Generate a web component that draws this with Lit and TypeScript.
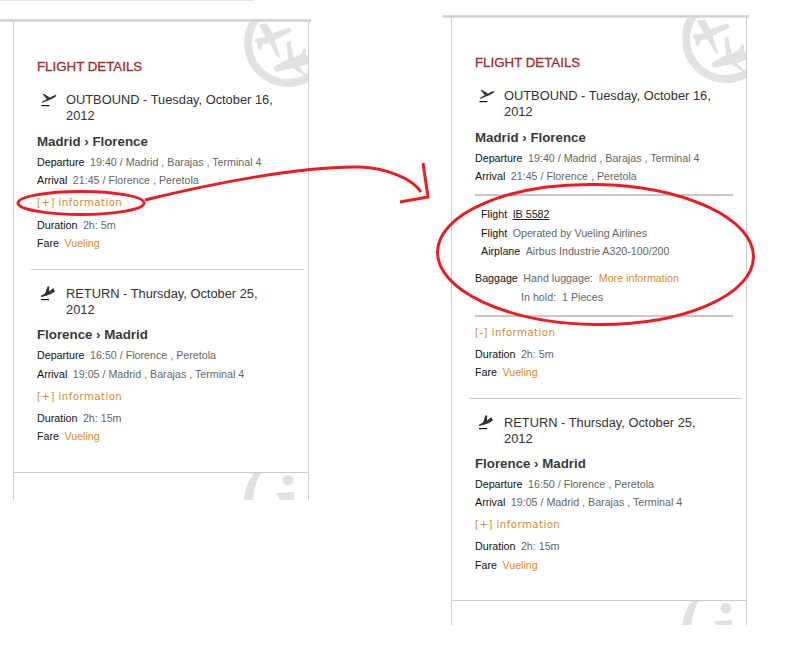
import { LitElement, html, css, svg } from "lit";
import { customElement, property } from "lit/decorators.js";

const OUT_ICON = svg`<path d="M2.5 10 L15 3.5 Q17.5 2.5 17.3 3.7 Q16.5 5.5 9 8.5 L3.5 10.8 Z" fill="#333"/><path d="M3.5 2 L5 2 L11 5.5 L8 7.5 Z" fill="#333"/><rect x="2.5" y="13" width="8" height="1.2" fill="#111"/>`;
const RET_ICON = svg`<path d="M1.5 10 L6 7.5 L8.5 0.5 L10.2 0.5 L10 5.5 L13.8 2.5 L15 2.5 L15 4.5 Q16.5 4.5 16 5.5 Q12 8.5 8 9.5 L2.5 11 Z" fill="#333"/><rect x="2" y="13" width="8" height="1.2" fill="#111"/>`;

interface Leg {
  kind: "out" | "ret";
  head: string;
  route: string;
  dep: string;
  arr: string;
  dur: string;
  depCls?: string;
  arrCls?: string;
  infoCls: string;
  afterCls: string;
  fareCls?: string;
  details?: boolean;
}

const outbound = {
  kind: "out" as const,
  head: "OUTBOUND - Tuesday, October 16, 2012",
  route: "Madrid › Florence",
  dep: "19:40 / Madrid , Barajas , Terminal 4",
  arr: "21:45 / Florence , Peretola",
  dur: "2h: 5m",
};
const inbound = {
  kind: "ret" as const,
  head: "RETURN - Thursday, October 25, 2012",
  route: "Florence › Madrid",
  dep: "16:50 / Florence , Peretola",
  arr: "19:05 / Madrid , Barajas , Terminal 4",
  dur: "2h: 15m",
};

@customElement("flight-panel")
class FlightPanel extends LitElement {
  @property({ type: Boolean }) expanded = false;

  static styles = css`
    :host { display: block; font-family: "Liberation Sans", Arial, sans-serif; font-size: 10.7px; color: #666; }
    .bar { height: 3px; background: linear-gradient(#dcdcdc, #d0d0d0 60%, #e8e8e8); }
    .body { position: relative; overflow: hidden; box-sizing: border-box; width: 296px; margin-left: var(--inset, 0); border-left: 1px solid #ccc; border-right: 1px solid #ccc; padding-top: 37px; }
    .inner { padding-left: 23px; position: relative; }
    .mark { position: absolute; top: 0; right: 0; width: 70px; height: 70px; }
    .title { font-size: 13.3px; line-height: 16px; color: #a32a2e; margin: 0 0 17px; font-weight: 400; -webkit-text-stroke: 0.3px #a32a2e; }
    .head { display: flex; font-size: 12.85px; line-height: 16px; color: #333; padding-right: 20px; }
    .head svg { width: 20px; height: 20px; margin: 0 7px 0 2px; flex: none; }
    .route { font-size: 13.3px; font-weight: 700; line-height: 18px; color: #3a3a3a; margin-top: 9px; }
    .route.ret { margin-top: 8px; }
    .rows { margin-top: 2px; }
    .row { display: flex; line-height: 18px; height: 18px; white-space: pre; }
    .row b { font-weight: 400; color: #111; margin-right: 5.5px; }
    .gap1 { margin-top: 1px; }
    .gap9 { margin-top: 9px; }
    .info { font-family: "DejaVu Sans", sans-serif; font-size: 10.2px; letter-spacing: 0.45px; line-height: 18px; height: 18px; color: #d98b1f; }
    .i5 { margin-top: 5px; }
    .i7 { margin-top: 7px; }
    .a3 { margin-top: 3px; }
    .a4 { margin-top: 4px; }
    .orange { color: #d98b1f; }
    .hr { height: 1px; background: #ccc; margin: 17px 4px 16px -6px; }
    .thick { height: 2px; background: #c8c8c8; margin: 9px 13px 0 0; }
    .details { padding-top: 9px; }
    .in { padding-left: 6px; }
    .link { color: #222; text-decoration: underline; }
    .hold { padding-left: 46px; }
    .rule { height: 1px; background: #ccc; margin-top: 27px; }
    .rule.short { margin-top: 26px; }
    .foot { position: relative; overflow: hidden; height: 27px; }
    .foot.short { height: 24px; }
    .foot svg { position: absolute; right: 0; top: 0; width: 70px; height: 27px; }
  `;

  private leg(l: Leg) {
    const isRet = l.kind === "ret";
    return html`
      <div class="head">
        <svg viewBox="0 0 20 20">${isRet ? RET_ICON : OUT_ICON}</svg>
        <span>${l.head}</span>
      </div>
      <div class="route ${isRet ? "ret" : ""}">${l.route}</div>
      <div class="rows">
        <div class="row ${l.depCls ?? ""}"><b>Departure</b>${l.dep}</div>
        <div class="row ${l.arrCls ?? ""}"><b>Arrival</b>${l.arr}</div>
      </div>
      ${l.details
        ? html`
            <div class="thick"></div>
            <div class="details">
              <div class="row in"><b>Flight</b><span class="link">IB 5582</span></div>
              <div class="row in gap1"><b>Flight</b>Operated by Vueling Airlines</div>
              <div class="row in"><b>Airplane</b>Airbus Industrie A320-100/200</div>
              <div class="row gap9"><b>Baggage</b>Hand luggage:  <span class="orange">More information</span></div>
              <div class="row hold gap1">In hold:  1 Pieces</div>
            </div>
            <div class="thick"></div>
          `
        : ""}
      <div class="info ${l.infoCls}">${l.details ? "[-]" : "[+]"} information</div>
      <div class="row ${l.afterCls}"><b>Duration</b>${l.dur}</div>
      <div class="row ${l.fareCls ?? ""}"><b>Fare</b><span class="orange">Vueling</span></div>
    `;
  }

  render() {
    const x = this.expanded;
    const first: Leg = x
      ? { ...outbound, details: true, infoCls: "i7", afterCls: "a3" }
      : { ...outbound, infoCls: "i5", afterCls: "a4" };
    const second: Leg = x
      ? { ...inbound, depCls: "gap1", infoCls: "i5", afterCls: "a3", fareCls: "gap1" }
      : { ...inbound, arrCls: "gap1", infoCls: "i5", afterCls: "a3" };
    return html`
      <div class="bar"></div>
      <div class="body">
        <svg class="mark" viewBox="0 0 70 70">
          <circle cx="50" cy="21" r="40" fill="none" stroke="#e2e2e2" stroke-width="8" />
          <g fill="#e2e2e2" transform="translate(5 -2) scale(0.3333)">
            <path d="M48 14 L72 10 L88 40 L140 22 L147 34 L95 60 L112 115 L104 112 L80 70 L60 72 L52 92 L45 88 L42 68 L34 64 L38 56 L68 52 Z" />
            <path d="M130 65 L142 63 L152 115 L176 100 L182 84 L190 88 L188 104 L198 110 L198 130 L168 142 L192 165 L186 168 L150 145 L98 155 L90 142 L135 118 Z" />
          </g>
        </svg>
        <div class="inner">
          <h2 class="title">FLIGHT DETAILS</h2>
          ${this.leg(first)}
          <div class="hr"></div>
          ${this.leg(second)}
        </div>
        <div class="rule ${x ? "short" : ""}"></div>
        <div class="foot ${x ? "short" : ""}">
          <svg viewBox="0 0 70 27">
            <path d="M6 27 Q7 12 16 0 L23 0 Q16 12 15 27 Z" fill="#e2e2e2" />
            <circle cx="50" cy="7" r="5.5" fill="#e2e2e2" />
            <path d="M38 20 L56 19 L56 27 L42 27 Z" fill="#e2e2e2" />
          </svg>
        </div>
      </div>
    `;
  }
}

@customElement("app-root")
class AppRoot extends LitElement {
  static styles = css`
    :host { display: block; position: relative; width: 788px; height: 652px; overflow: hidden; background: #fff; }
    .strip { height: 1px; width: 254px; background: #e6e6e6; }
    .stage { display: flex; align-items: flex-start; }
    .left { width: 311px; margin-top: 18px; --inset: 13px; }
    .right { width: 306px; margin-left: 132px; margin-top: 14px; --inset: 8px; }
    flight-panel { display: block; }
    .marks { position: absolute; inset: 0; width: 788px; height: 652px; pointer-events: none; }
  `;
  render() {
    return html`
      <div class="strip"></div>
      <div class="stage">
        <div class="left"><flight-panel></flight-panel></div>
        <div class="right"><flight-panel expanded></flight-panel></div>
      </div>
      <svg class="marks" viewBox="0 0 788 652" fill="none" stroke="#ed1c24" stroke-width="3">
        <ellipse cx="81" cy="203" rx="63" ry="11.5" />
        <path d="M145 200 C 210 184, 300 166, 360 167 C 385 168, 412 178, 421 192" />
        <path d="M423 163 L428 197 L400 202" />
        <ellipse cx="595.5" cy="254.5" rx="158" ry="70" transform="rotate(1 595 254)" />
      </svg>
    `;
  }
}
